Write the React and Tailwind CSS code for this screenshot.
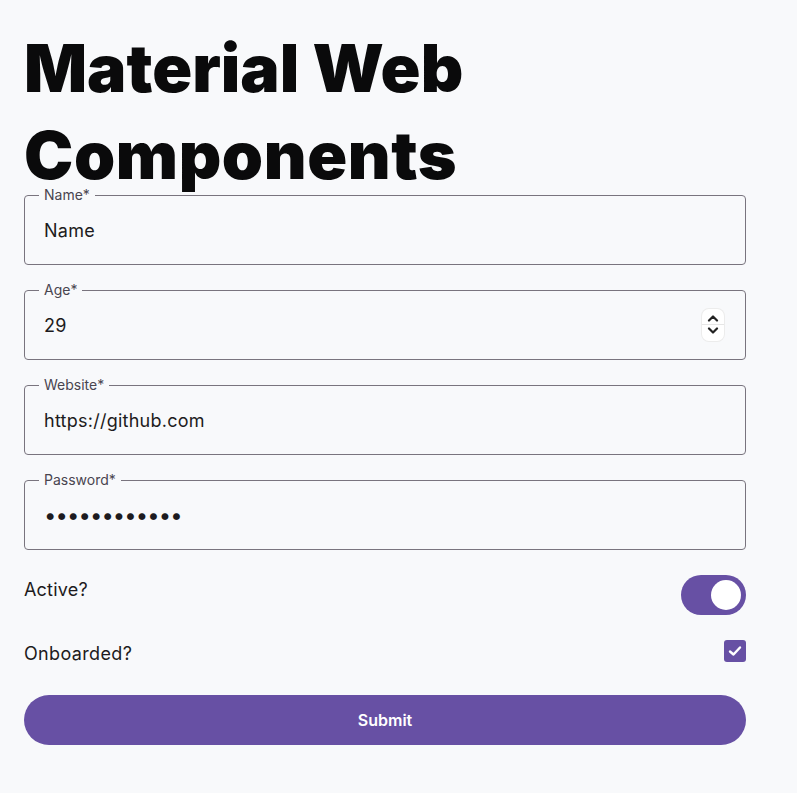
import { useState } from "react";

const Field = ({ label, value, type = "text", stepper = false }) => (
  <div className="relative h-[70px] w-full rounded-[4px] border border-[#79747e]">
    <span className="absolute left-[14px] top-[-9px] bg-[#f8f9fb] px-[5px] text-[14px] leading-[16px] text-[#49454f]">
      {label}
    </span>
    <div className="flex h-full items-center pl-[19px] pr-[21px]">
      <input
        type={type}
        defaultValue={value}
        readOnly
        className={`w-full bg-transparent text-[#1d1b20] outline-none ${type === "password" ? "text-[22px] tracking-[-0.9px]" : "text-[18px] tracking-[0.25px]"}`}
      />
      {stepper && (
        <div className="flex h-[32px] w-[22px] shrink-0 flex-col items-center rounded-[7px] bg-white shadow-[0_0_0_1px_#ececec]">
          <div className="flex h-[15px] items-end justify-center pb-[2px]">
            <svg width="12" height="8" viewBox="0 0 12 8">
              <path d="M2 6.5 L6 2.5 L10 6.5" fill="none" stroke="#222" strokeWidth="2.2" strokeLinecap="round" strokeLinejoin="round" />
            </svg>
          </div>
          <div className="h-px w-full bg-[#e6e6e6]" />
          <div className="flex h-[15px] items-start justify-center pt-[2px]">
            <svg width="12" height="8" viewBox="0 0 12 8">
              <path d="M2 1.5 L6 5.5 L10 1.5" fill="none" stroke="#222" strokeWidth="2.2" strokeLinecap="round" strokeLinejoin="round" />
            </svg>
          </div>
        </div>
      )}
    </div>
  </div>
);

export default function App() {
  const [active, setActive] = useState(true);
  const [onboarded, setOnboarded] = useState(true);

  return (
    <div className="min-h-[793px] bg-[#f8f9fb] px-6 pt-[25px] font-['Inter','Liberation_Sans',sans-serif] text-[#1d1b20]">
      <h1 className="mb-[-11px] text-[66px] font-black leading-[87px] text-[#0a0a0b]">
        Material Web <span className="tracking-[0.6px]">Components</span>
      </h1>
      <form className="flex w-[722px] flex-col pt-[7px]" onSubmit={(e) => e.preventDefault()}>
        <div className="flex flex-col gap-[25px]">
          <Field label="Name*" value="Name" />
          <Field label="Age*" value="29" stepper />
          <Field label="Website*" value="https://github.com" />
          <Field label="Password*" value="password1234" type="password" />
        </div>

        <div className="mt-[25px] flex h-[40px] items-start justify-between">
          <span className="pt-[3px] text-[18px] leading-[24px] tracking-[0.2px]">Active?</span>
          <button
            type="button"
            onClick={() => setActive(!active)}
            className={`flex h-[40px] w-[65px] items-center rounded-full px-[5px] ${active ? "justify-end bg-[#6750a4]" : "justify-start bg-[#e7e0ec]"}`}
          >
            <span className="h-[30px] w-[30px] rounded-full bg-white" />
          </button>
        </div>

        <div className="mt-[25px] flex h-[24px] items-start justify-between">
          <span className="pt-[2px] text-[18px] leading-[24px] tracking-[0.35px]">Onboarded?</span>
          <button
            type="button"
            onClick={() => setOnboarded(!onboarded)}
            className={`flex h-[22px] w-[22px] items-center justify-center rounded-[3px] ${onboarded ? "bg-[#6750a4]" : "border-2 border-[#49454f]"}`}
          >
            {onboarded && (
              <svg width="16" height="16" viewBox="0 0 16 16">
                <path d="M3 8.5 L6.5 11.5 L13 4.5" fill="none" stroke="white" strokeWidth="2.4" strokeLinecap="round" strokeLinejoin="round" />
              </svg>
            )}
          </button>
        </div>

        <button
          type="submit"
          className="mt-[31px] h-[50px] w-full rounded-full bg-[#6750a4] text-[16px] font-semibold text-white"
        >
          Submit
        </button>
      </form>
    </div>
  );
}
